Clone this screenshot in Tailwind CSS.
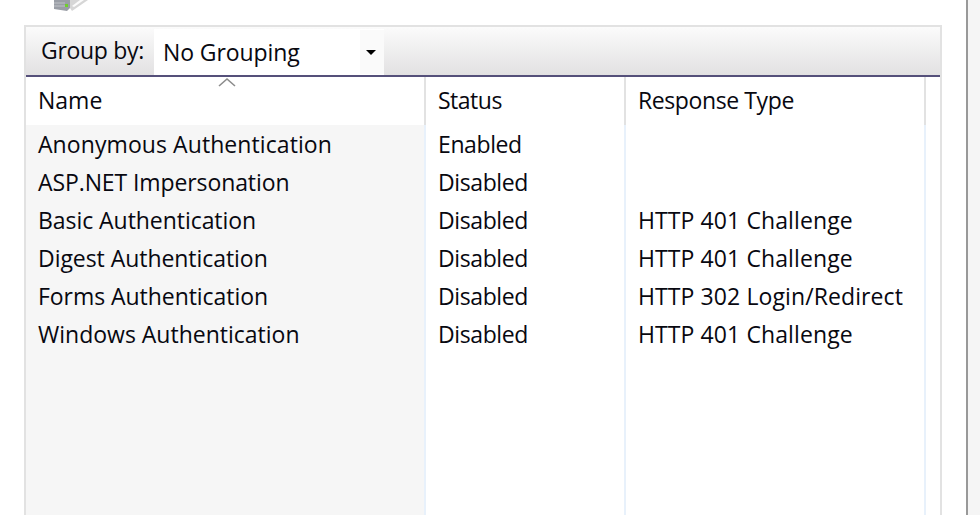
<!DOCTYPE html>
<html><head><meta charset="utf-8"><script src="https://cdn.jsdelivr.net/npm/@tailwindcss/browser@4"></script></head>
<body class="bg-white overflow-hidden">
<div class="flex h-[515px] w-[980px] font-['Open_Sans','Noto_Sans',sans-serif] text-[23px] text-[#080810]">
  <div class="w-[966px] shrink-0">
    <div class="h-[25px] pl-[54px]">
      <svg width="36" height="12" viewBox="0 0 36 12" class="block"><path d="M0 0h16v8l-3 3-13-2z" fill="#9a9ea6"/><path d="M0 3h11M0 6h11" stroke="#bfc2c7"/><rect x="11" y="4" width="3" height="3" fill="#6fcf2c"/><path d="M16 8V0h18l-16 11z" fill="#d6d6d6"/><path d="M18 6l8-6h4l-10 7z" fill="#fbfbfb"/></svg>
    </div>
    <div class="ml-[24px] w-[918px] h-[490px] border-x-2 border-t-2 border-[#e2e2e2] flex flex-col">
      <div class="h-[50px] flex items-end bg-gradient-to-b from-[#fbfbfb] to-[#e2e1e2] border-b-[2px] border-[#55507a] shrink-0">
        <span class="w-[128px] pl-[15px] h-[46px] leading-[42px] tracking-[-0.3px]">Group by:</span>
        <div class="w-[230px] h-[46px] bg-white flex items-center justify-between">
          <span class="pl-[9px] tracking-[-0.1px]">No Grouping</span>
          <span class="w-[24px] h-[44px] bg-[#fafafa] flex items-center justify-center pr-[2px]"><span class="border-x-[5px] border-t-[5px] border-x-transparent border-t-black"></span></span>
        </div>
      </div>
      <div class="relative flex flex-1">
        <svg width="18" height="10" viewBox="0 0 18 10" class="absolute left-[192px] top-0"><path d="M1 9l8-7 8 7" fill="none" stroke="#8c8c8c" stroke-width="1.6"/></svg>
        <div class="w-[400px] flex flex-col">
          <div class="h-[48px] pl-[12px] leading-[47px] bg-white border-r-2 border-[#e2e2e2]">Name</div>
          <div class="flex-1 bg-[#f6f6f6] pl-[12px] border-r-2 border-[#e8f1fb] [&>div]:h-[38px] [&>div]:leading-[38px]">
            <div class="tracking-[0.08px]">Anonymous Authentication</div><div class="tracking-[-0.1px]">ASP.NET Impersonation</div><div class="tracking-[-0.05px]">Basic Authentication</div><div class="tracking-[-0.05px]">Digest Authentication</div><div class="tracking-[-0.05px]">Forms Authentication</div><div>Windows Authentication</div>
          </div>
        </div>
        <div class="w-[200px] flex flex-col">
          <div class="h-[48px] pl-[12px] leading-[47px] tracking-[-0.5px] border-r-2 border-[#e2e2e2]">Status</div>
          <div class="flex-1 pl-[12px] tracking-[-0.4px] border-r-2 border-[#e8f1fb] [&>div]:h-[38px] [&>div]:leading-[38px]">
            <div>Enabled</div><div>Disabled</div><div>Disabled</div><div>Disabled</div><div>Disabled</div><div>Disabled</div>
          </div>
        </div>
        <div class="w-[300px] flex flex-col">
          <div class="h-[48px] pl-[12px] leading-[47px] tracking-[-0.4px] border-r-2 border-[#e2e2e2]">Response Type</div>
          <div class="flex-1 pl-[12px] tracking-[0.1px] border-r-2 border-[#e8f1fb] [&>div]:h-[38px] [&>div]:leading-[38px]">
            <div>&nbsp;</div><div>&nbsp;</div><div>HTTP 401 Challenge</div><div>HTTP 401 Challenge</div><div>HTTP 302 Login/Redirect</div><div>HTTP 401 Challenge</div>
          </div>
        </div>
      </div>
    </div>
  </div>
  <div class="w-[2px] h-full bg-[#999999] shrink-0"></div>
  <div class="flex-1 h-full bg-[#f5f5f5]"></div>
</div>
</body></html>
